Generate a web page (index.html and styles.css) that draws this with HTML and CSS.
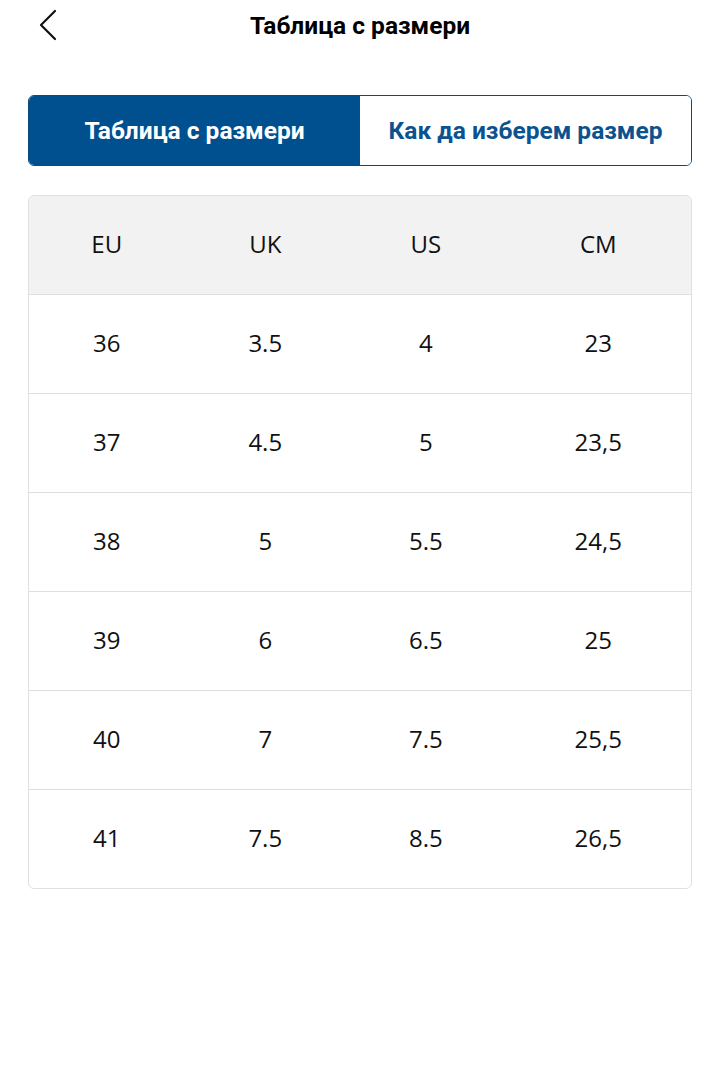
FILE: index.html
```html
<!DOCTYPE html>
<html lang="bg">
<head>
<meta charset="utf-8">
<link rel="stylesheet" href="styles.css">
</head>
<body>
<header class="topbar">
  <button class="back" aria-label="Назад">
    <svg width="20" height="32" viewBox="0 0 20 32"><path d="M17 2 L3 16 L17 30" fill="none" stroke="#111" stroke-width="2.2" stroke-linecap="round" stroke-linejoin="round"/></svg>
  </button>
  <h1 class="title">Таблица с размери</h1>
</header>
<main class="content">
  <div class="tabs">
    <div class="tab active">Таблица с размери</div>
    <div class="tab">Как да изберем размер</div>
  </div>
  <div class="table">
    <div class="row head"><div>EU</div><div>UK</div><div>US</div><div>CM</div></div>
    <div class="row"><div>36</div><div>3.5</div><div>4</div><div>23</div></div>
    <div class="row"><div>37</div><div>4.5</div><div>5</div><div>23,5</div></div>
    <div class="row"><div>38</div><div>5</div><div>5.5</div><div>24,5</div></div>
    <div class="row"><div>39</div><div>6</div><div>6.5</div><div>25</div></div>
    <div class="row"><div>40</div><div>7</div><div>7.5</div><div>25,5</div></div>
    <div class="row"><div>41</div><div>7.5</div><div>8.5</div><div>26,5</div></div>
  </div>
</main>
</body>
</html>
```
FILE: styles.css
```css
html, body { margin: 0; padding: 0; background: #fff; }
body { font-family: Roboto, "Noto Sans", sans-serif; color: #111; }
.topbar {
  position: relative;
  height: 50px;
  display: flex;
  align-items: center;
  justify-content: center;
}
.back {
  position: absolute;
  left: 38px;
  top: 9px;
  background: none;
  border: 0;
  padding: 0;
  width: 20px;
  height: 32px;
}
.title {
  margin: 0;
  font-size: 24.5px;
  font-weight: 700;
  color: #000;
}
.content { padding: 45px 28px 0 28px; }
.tabs {
  display: flex;
  height: 71px;
  border: 1px solid #0b4a7d;
  border-radius: 6px;
  overflow: hidden;
  box-sizing: border-box;
}
.tab {
  flex: 1;
  display: flex;
  align-items: center;
  justify-content: center;
  font-size: 24.5px;
  font-weight: 700;
  color: #0b5390;
  background: #fff;
}
.tab.active {
  flex: 0 0 331px;
  background: #00508f;
  color: #fff;
}
.table {
  margin-top: 29px;
  border: 1px solid #e0e0e0;
  border-radius: 6px;
  overflow: hidden;
  font-family: "Open Sans", "Noto Sans", sans-serif;
  font-size: 24px;
  color: #111;
}
.row {
  display: grid;
  grid-template-columns: 156fr 162fr 160fr 186fr;
  height: 99px;
  align-items: center;
  text-align: center;
  border-top: 1px solid #dedede;
  box-sizing: border-box;
  padding-bottom: 4px;
}
.row.head {
  border-top: 0;
  background: #f2f2f2;
  height: 98px;
  font-weight: 500;
}
```
